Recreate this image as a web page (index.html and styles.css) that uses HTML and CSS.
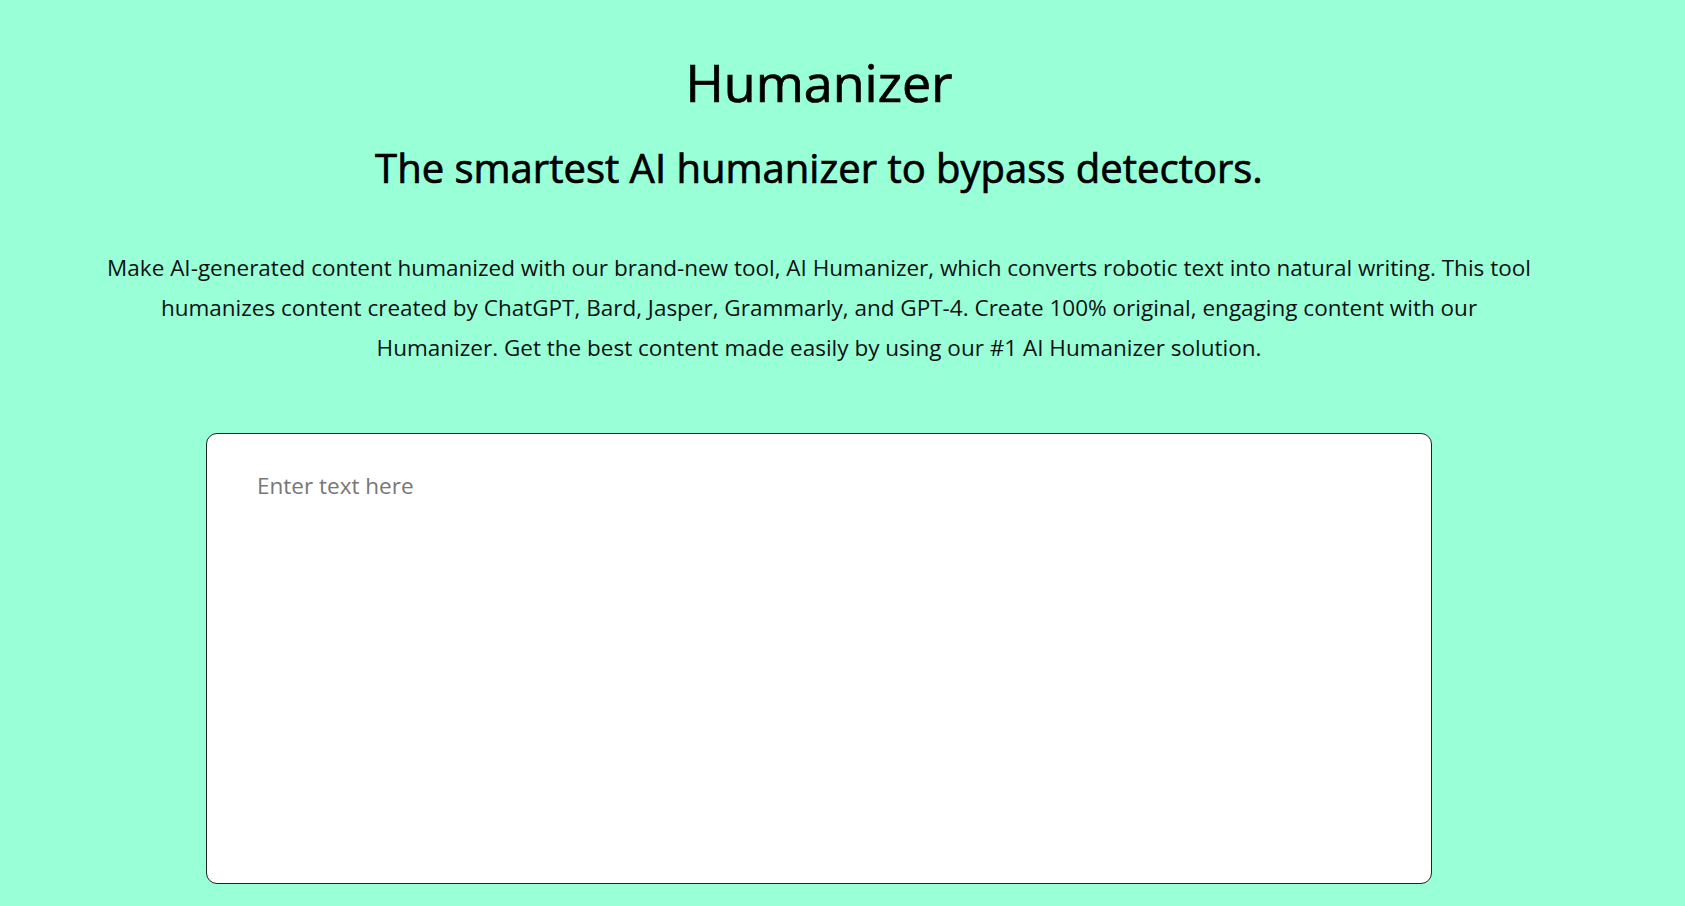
FILE: index.html
```html
<!DOCTYPE html>
<html lang="en">
<head>
<meta charset="utf-8">
<title>Humanizer</title>
<link rel="stylesheet" href="styles.css">
</head>
<body>
<main class="page">
  <header class="hero">
    <h1 class="hero-title">Humanizer</h1>
    <h2 class="hero-subtitle">The smartest AI humanizer to bypass detectors.</h2>
    <p class="hero-text">Make AI-generated content humanized with our brand-new tool, AI Humanizer, which converts robotic text into natural writing. This tool humanizes content created by ChatGPT, Bard, Jasper, Grammarly, and GPT-4. Create 100% original, engaging content with our Humanizer. Get the best content made easily by using our #1 AI Humanizer solution.</p>
  </header>
  <section class="editor">
    <textarea class="editor-input" placeholder="Enter text here"></textarea>
  </section>
</main>
</body>
</html>
```

FILE: styles.css
```css
html, body {
  margin: 0;
  padding: 0;
  background: #98ffd7;
  height: 100%;
  overflow: hidden;
}

body {
  font-family: "Open Sans", "Noto Sans", sans-serif;
  color: #000;
}

.page {
  width: 1638px;
  display: flex;
  flex-direction: column;
  align-items: center;
}

.hero {
  display: flex;
  flex-direction: column;
  align-items: center;
  text-align: center;
  padding-top: 46px;
}

.hero-title {
  margin: 0;
  font-size: 52px;
  font-weight: 400;
  line-height: normal;
  -webkit-text-stroke: 0.7px #000;
}

.hero-subtitle {
  margin: 23px 0 0;
  font-size: 40px;
  font-weight: 400;
  line-height: normal;
  -webkit-text-stroke: 0.7px #000;
}

.hero-text {
  margin: 53px 0 0;
  width: 1432px;
  font-size: 22.5px;
  line-height: 40px;
  color: #111;
}

.editor {
  margin-top: 65px;
  width: 1226px;
}

.editor-input {
  display: block;
  box-sizing: border-box;
  width: 100%;
  height: 451px;
  padding: 36px 50px;
  border: 1px solid #222;
  border-radius: 11px;
  background: #fff;
  font-family: "Open Sans", "Noto Sans", sans-serif;
  font-size: 22.5px;
  color: #222;
  resize: none;
  outline: none;
}

.editor-input::placeholder {
  color: #777;
}
```
